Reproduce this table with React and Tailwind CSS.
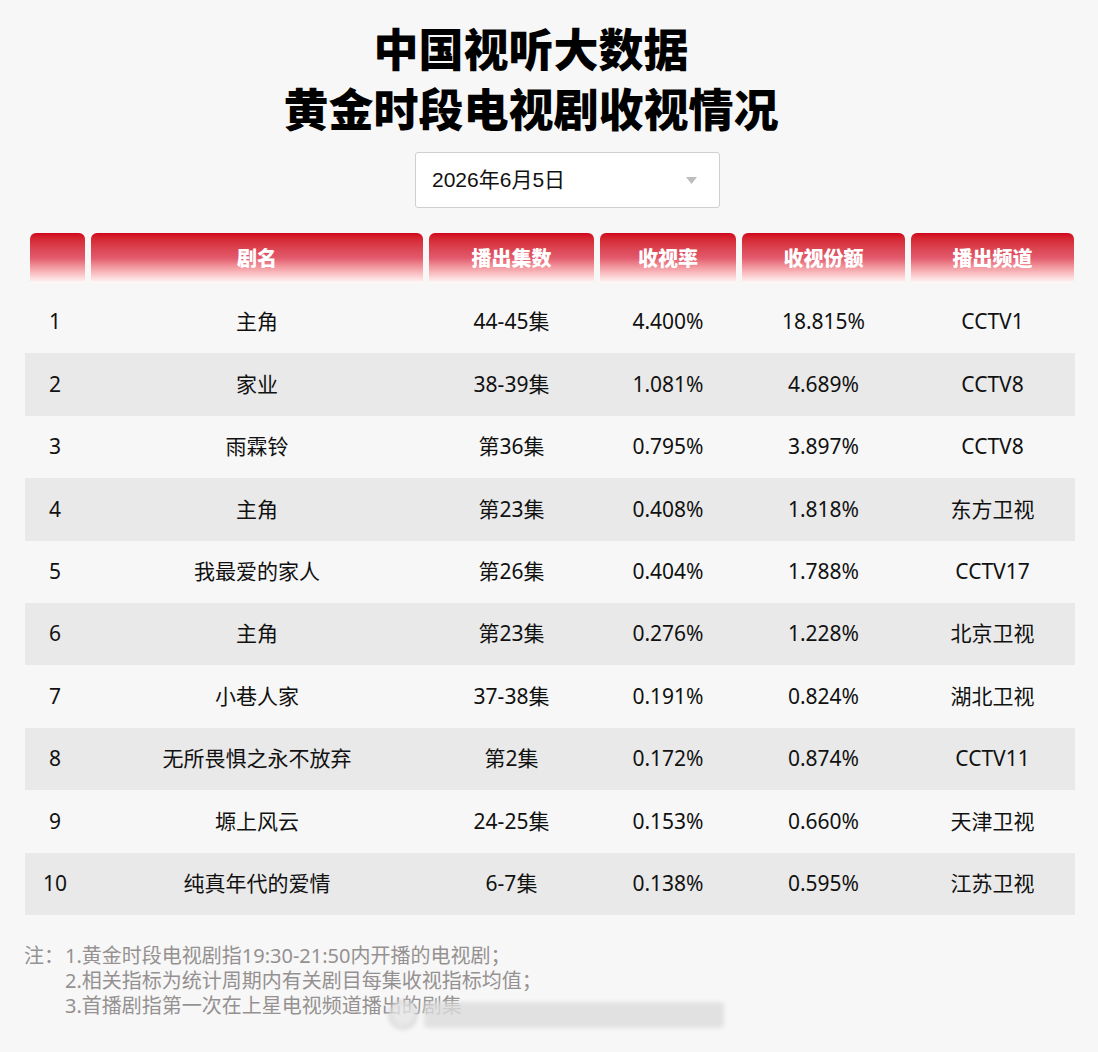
import React from 'react';

const rows = [
  ['1', '主角', '44-45集', '4.400%', '18.815%', 'CCTV1'],
  ['2', '家业', '38-39集', '1.081%', '4.689%', 'CCTV8'],
  ['3', '雨霖铃', '第36集', '0.795%', '3.897%', 'CCTV8'],
  ['4', '主角', '第23集', '0.408%', '1.818%', '东方卫视'],
  ['5', '我最爱的家人', '第26集', '0.404%', '1.788%', 'CCTV17'],
  ['6', '主角', '第23集', '0.276%', '1.228%', '北京卫视'],
  ['7', '小巷人家', '37-38集', '0.191%', '0.824%', '湖北卫视'],
  ['8', '无所畏惧之永不放弃', '第2集', '0.172%', '0.874%', 'CCTV11'],
  ['9', '塬上风云', '24-25集', '0.153%', '0.660%', '天津卫视'],
  ['10', '纯真年代的爱情', '6-7集', '0.138%', '0.595%', '江苏卫视'],
];

const headers = ['', '剧名', '播出集数', '收视率', '收视份额', '播出频道'];

const cols = 'grid grid-cols-[55px_332px_165px_136px_163px_163px] gap-x-[6px] px-[5px]';

const App = () => {
  return (
    <div className="relative w-[1098px] h-[1052px] overflow-hidden bg-[#f7f7f7] font-['Noto_Sans','Noto_Sans_CJK_SC',sans-serif] text-[#111]">
      {/* Title */}
      <div className="w-[1062px] pt-[18px] text-center font-['Noto_Sans_CJK_SC',sans-serif] font-black text-[45px] leading-[60px] text-black">
        <div>中国视听大数据</div>
        <div>黄金时段电视剧收视情况</div>
      </div>

      {/* Date select */}
      <div className="mt-[14px] ml-[415px] w-[305px] h-[56px] bg-white border border-[#cfcfcf] rounded-[3px] flex items-center justify-between pl-[16px] pr-[22px]">
        <span className="font-['Liberation_Sans','Noto_Sans_CJK_SC',sans-serif] text-[21px] text-[#111]">2026年6月5日</span>
        <svg width="11" height="7" viewBox="0 0 11 7">
          <path d="M0 0 L11 0 L5.5 7 Z" fill="#bdbdbd" />
        </svg>
      </div>

      {/* Table */}
      <div className="mt-[25px] ml-[25px] w-[1050px]">
        <div className={cols}>
          {headers.map((h, i) => (
            <div
              key={i}
              className="h-[50px] rounded-t-[6px] bg-linear-to-b from-[#d0021b] via-[#e25a6d] to-[#fdfafa] flex items-center justify-center text-white font-['Noto_Sans_CJK_SC',sans-serif] font-black text-[20px]"
            >
              {h}
            </div>
          ))}
        </div>

        <div className="mt-[8px]">
          {rows.map((r, idx) => (
            <div
              key={idx}
              className={`${cols} h-[62.4px] items-center text-[21px] ${idx % 2 === 1 ? 'bg-[#e9e9e9]' : ''}`}
            >
              {r.map((c, j) => (
                <div key={j} className={`text-center whitespace-nowrap ${j === 0 ? 'pr-[5px]' : ''}`}>{c}</div>
              ))}
            </div>
          ))}
        </div>
      </div>

      {/* Notes */}
      <div className="mt-[28px] ml-[24px] text-[20px] leading-[25px] text-[#959191]">
        <div className="flex">
          <span className="w-[41px]">注：</span>
          <span>1.黄金时段电视剧指19:30-21:50内开播的电视剧；</span>
        </div>
        <div className="pl-[41px]">2.相关指标为统计周期内有关剧目每集收视指标均值；</div>
        <div className="pl-[41px]">3.首播剧指第一次在上星电视频道播出的剧集</div>
      </div>

      {/* blurred watermark */}
      <div className="absolute left-[388px] top-[1000px] flex items-center gap-[6px] blur-[2px] opacity-80">
        <div className="w-[30px] h-[30px] rounded-full border-[4px] border-[#d6d6d6] bg-[#e6e6e6]" />
        <div className="w-[300px] h-[26px] rounded-[4px] bg-[#dcdcdc]" />
      </div>
    </div>
  );
};

export default App;
